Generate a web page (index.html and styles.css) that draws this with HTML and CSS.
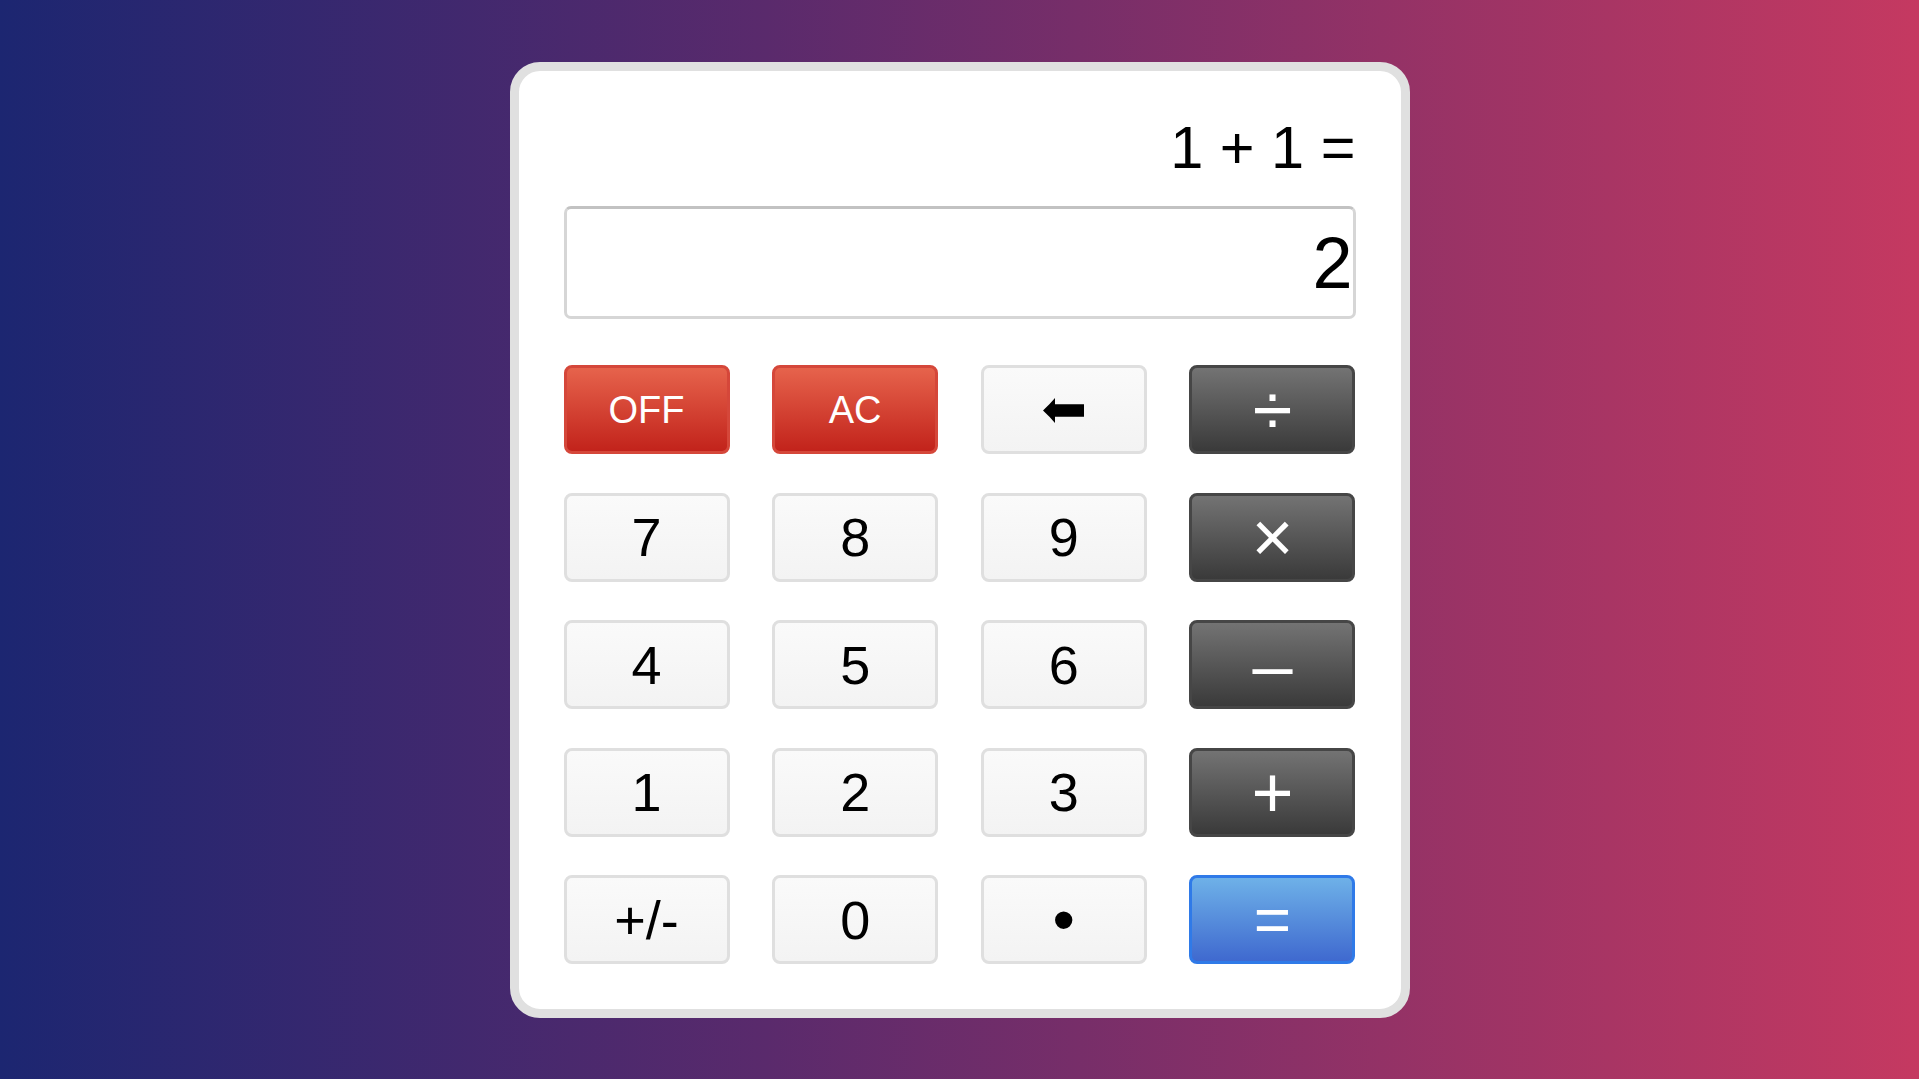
FILE: index.html
```html
<!DOCTYPE html>
<html lang="en">
<head>
<meta charset="utf-8">
<title>Calculator</title>
<link rel="stylesheet" href="styles.css">
</head>
<body>
<main class="calc">
  <div class="expr">1 + 1 =</div>
  <div class="screen">2</div>
  <div class="keys">
    <button class="key red">OFF</button>
    <button class="key red">AC</button>
    <button class="key light" aria-label="backspace"><svg class="arrow" width="41" height="25" viewBox="0 0 41 25"><path d="M0 12.5 Q6.5 6.5 12 0 L12 6.3 L41 6.3 L41 18.7 L12 18.7 L12 25 Q6.5 18.5 0 12.5 Z" fill="#000"/></svg></button>
    <button class="key dark op">÷</button>
    <button class="key light">7</button>
    <button class="key light">8</button>
    <button class="key light">9</button>
    <button class="key dark op">×</button>
    <button class="key light">4</button>
    <button class="key light">5</button>
    <button class="key light">6</button>
    <button class="key dark op">–</button>
    <button class="key light">1</button>
    <button class="key light">2</button>
    <button class="key light">3</button>
    <button class="key dark op">+</button>
    <button class="key light">+/-</button>
    <button class="key light">0</button>
    <button class="key light dot">•</button>
    <button class="key blue eq">=</button>
  </div>
</main>
</body>
</html>
```
FILE: styles.css
```css
html, body {
  margin: 0;
  padding: 0;
}
body {
  min-height: 100vh;
  background: linear-gradient(to right, #1c2671 0%, #5a2a6c 40%, #c53961 100%);
  display: flex;
  justify-content: center;
  align-items: flex-start;
  font-family: "Liberation Sans", Arial, sans-serif;
}
.calc {
  box-sizing: border-box;
  width: 900px;
  margin-top: 62px;
  background: #fff;
  border: 9px solid #e0e0e0;
  border-radius: 30px;
  padding: 44px 45px 45px;
}
.expr {
  text-align: right;
  font-size: 59.5px;
  line-height: 66px;
  color: #000;
}
.screen {
  box-sizing: border-box;
  margin-top: 25px;
  height: 113px;
  border: 3px solid #d6d6d6;
  border-top-color: #c2c2c2;
  border-radius: 7px;
  padding-top: 2px;
  text-align: right;
  font-size: 72px;
  line-height: 105px;
  color: #000;
  overflow: hidden;
}
.keys {
  margin-top: 46px;
  display: grid;
  grid-template-columns: repeat(4, 166px);
  grid-auto-rows: 89px;
  justify-content: space-between;
  row-gap: 38.5px;
}
.key {
  box-sizing: border-box;
  margin: 0;
  padding: 0;
  border: 3px solid #dfdfdf;
  border-radius: 8px;
  font-family: inherit;
  font-size: 54px;
  line-height: 1;
  display: flex;
  align-items: center;
  justify-content: center;
  color: #000;
}
.light {
  background: linear-gradient(to bottom, #fafafa, #f3f3f3);
}
.red {
  background: linear-gradient(to bottom, #e6634c, #c2231b);
  border-color: #d5473a;
  color: #fff;
  font-size: 38px;
}
.dark {
  background: linear-gradient(to bottom, #737373, #3a3a3a);
  border-color: #464646;
  color: #fff;
}
.blue {
  background: linear-gradient(to bottom, #6eb1e8, #3f69cf);
  border-color: #2f7ae8;
  color: #fff;
}
.op {
  font-size: 72px;
}
.eq {
  font-size: 64px;
}
.dot {
  font-size: 64px;
}
.arrow {
  display: block;
  margin-top: 2px;
}
```
